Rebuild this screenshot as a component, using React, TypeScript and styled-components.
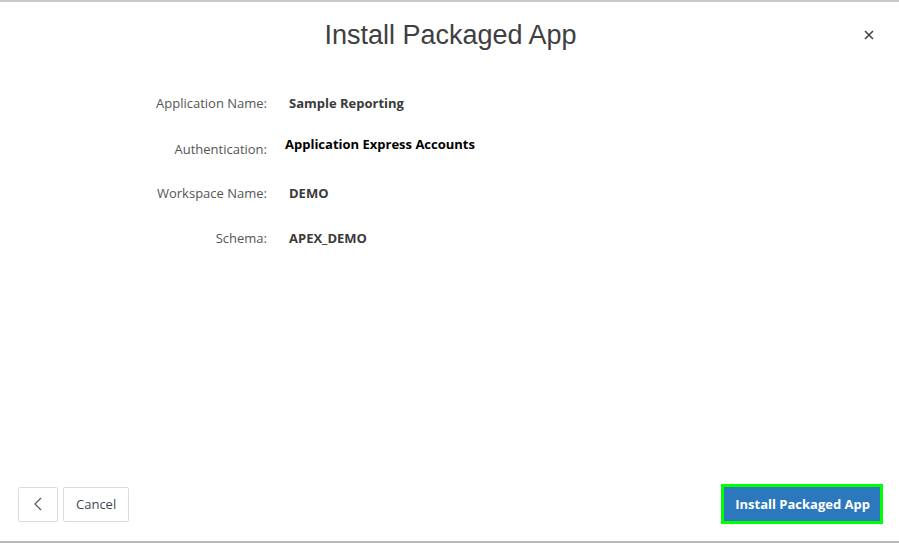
import * as React from "react"
import styled, { createGlobalStyle } from "styled-components"

const GlobalStyle = createGlobalStyle`
  html, body {
    margin: 0;
    padding: 0;
    background: #ffffff;
  }
  * {
    box-sizing: border-box;
  }
`

const fields = [
  { label: "Application Name:", value: "Sample Reporting" },
  { label: "Authentication:", value: "Application Express Accounts", strong: true },
  { label: "Workspace Name:", value: "DEMO" },
  { label: "Schema:", value: "APEX_DEMO" },
]

const App = () => (
  <>
    <GlobalStyle />
    <Dialog>
      <Header>
        <span />
        <Title>Install Packaged App</Title>
        <CloseButton aria-label="Close">
          <svg width="10" height="10" viewBox="0 0 10 10">
            <path d="M1 1 L9 9 M9 1 L1 9" stroke="#444" strokeWidth="1.6" />
          </svg>
        </CloseButton>
      </Header>
      <Body>
        <Form>
          {fields.map((f) => (
            <Row key={f.label}>
              <Label $raise={f.strong}>{f.label}</Label>
              <Value $strong={f.strong}>{f.value}</Value>
            </Row>
          ))}
        </Form>
      </Body>
      <Footer>
        <LeftGroup>
          <Button aria-label="Previous">
            <svg width="8" height="14" viewBox="0 0 8 14">
              <path d="M7 1 L1 7 L7 13" fill="none" stroke="#555" strokeWidth="1.2" />
            </svg>
          </Button>
          <Button>Cancel</Button>
        </LeftGroup>
        <Highlight>
          <PrimaryButton>Install Packaged App</PrimaryButton>
        </Highlight>
      </Footer>
    </Dialog>
  </>
)

export default App

const Dialog = styled.div`
  height: 543px;
  display: flex;
  flex-direction: column;
  border-top: 2px solid #c8c8c8;
  border-bottom: 2px solid #b8b8b8;
  background: #ffffff;
`

const Header = styled.div`
  height: 66px;
  display: grid;
  grid-template-columns: 1fr auto 1fr;
  align-items: center;
  padding: 0 25px 0 27px;
`

const Title = styled.h1`
  margin: 0;
  font-family: "Liberation Sans", Arial, sans-serif;
  font-weight: normal;
  font-size: 27px;
  color: #404040;
`

const CloseButton = styled.button`
  justify-self: end;
  border: none;
  background: none;
  padding: 0;
  width: 10px;
  height: 10px;
  display: flex;
`

const Body = styled.div`
  flex: 1;
  padding-top: 12px;
`

const Form = styled.div`
  display: grid;
  grid-template-columns: 267px 1fr;
`

const Row = styled.div`
  display: contents;
`

const Label = styled.div<{ $raise?: boolean }>`
  height: 45px;
  display: flex;
  align-items: center;
  justify-content: flex-end;
  font-family: "Open Sans", "Segoe UI", sans-serif;
  font-size: 13px;
  color: #555555;
  padding-top: ${(p) => (p.$raise ? "2px" : "0")};
`

const Value = styled.div<{ $strong?: boolean }>`
  height: 45px;
  display: flex;
  align-items: center;
  font-family: "Open Sans", "Segoe UI", sans-serif;
  font-weight: bold;
  font-size: 13px;
  color: ${(p) => (p.$strong ? "#000000" : "#3a3a3a")};
  padding-left: ${(p) => (p.$strong ? "18px" : "22px")};
  padding-bottom: ${(p) => (p.$strong ? "8px" : "0")};
`

const Footer = styled.div`
  display: flex;
  justify-content: space-between;
  align-items: center;
  padding: 0 16px 17px 18px;
`

const LeftGroup = styled.div`
  display: flex;
  gap: 5px;
`

const Button = styled.button`
  height: 35px;
  min-width: 40px;
  padding: 0 12px;
  display: flex;
  align-items: center;
  justify-content: center;
  background: #ffffff;
  border: 1px solid #dcdcdc;
  border-radius: 2px;
  font-family: "Open Sans", "Segoe UI", sans-serif;
  font-size: 13px;
  color: #404858;
`

const Highlight = styled.div`
  border: 3px solid #00ff00;
  padding: 0;
  display: flex;
`

const PrimaryButton = styled.button`
  height: 34px;
  padding: 0 10px 0 11px;
  border: none;
  background: #2c78bd;
  color: #ffffff;
  font-family: "Open Sans", "Segoe UI", sans-serif;
  font-weight: bold;
  font-size: 13px;
`
